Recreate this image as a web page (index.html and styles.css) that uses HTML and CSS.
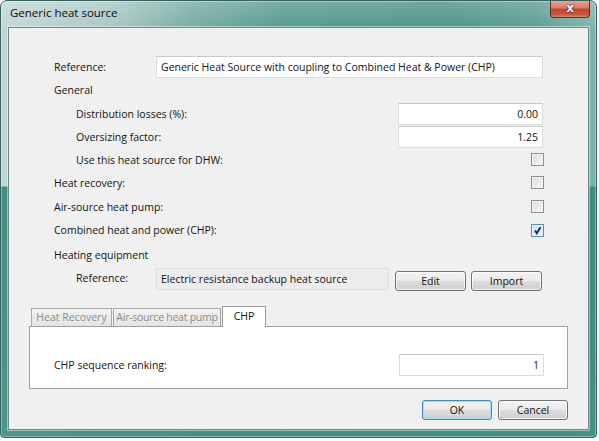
FILE: index.html
```html
<!DOCTYPE html>
<html>
<head>
<meta charset="utf-8">
<title>Generic heat source</title>
<link rel="stylesheet" href="styles.css">
</head>
<body>
<div class="window">
  <div class="titlebar">
    <span class="title">Generic heat source</span>
    <div class="close">x</div>
  </div>
  <div class="client">
    <div class="form">
      <div class="row r1">
        <span class="label lbl-ref">Reference:</span>
        <div class="textbox wide">Generic Heat Source with coupling to Combined Heat &amp; Power (CHP)</div>
      </div>
      <div class="row r2"><span class="label">General</span></div>
      <div class="row r3 sub">
        <span class="label">Distribution losses (%):</span>
        <div class="textbox num">0.00</div>
      </div>
      <div class="row r4 sub">
        <span class="label">Oversizing factor:</span>
        <div class="textbox num">1.25</div>
      </div>
      <div class="row r5 sub">
        <span class="label">Use this heat source for DHW:</span>
        <span class="check"></span>
      </div>
      <div class="row r6">
        <span class="label">Heat recovery:</span>
        <span class="check"></span>
      </div>
      <div class="row r7">
        <span class="label">Air-source heat pump:</span>
        <span class="check"></span>
      </div>
      <div class="row r8">
        <span class="label">Combined heat and power (CHP):</span>
        <span class="check checked"><svg viewBox="0 0 11 11" width="11" height="11"><path d="M3 5.5 L4.8 8.2 L8.5 2.2" fill="none" stroke="#17236b" stroke-width="1.9"/></svg></span>
      </div>
      <div class="row r9"><span class="label">Heating equipment</span></div>
      <div class="row r10 sub">
        <span class="label lbl-ref2">Reference:</span>
        <div class="textbox readonly">Electric resistance backup heat source</div>
        <button class="btn edit">Edit</button>
        <button class="btn import">Import</button>
      </div>
    </div>

    <div class="tabstrip">
      <div class="tab t1">Heat Recovery</div>
      <div class="tab t2">Air-source heat pump</div>
      <div class="tab active">CHP</div>
    </div>
    <div class="tabpanel">
      <div class="row panelrow">
        <span class="label">CHP sequence ranking:</span>
        <div class="textbox num">1</div>
      </div>
    </div>

    <div class="footer">
      <button class="btn ok">OK</button>
      <button class="btn cancel">Cancel</button>
    </div>
  </div>
</div>
</body>
</html>
```
FILE: styles.css
```css
html, body {
  margin: 0;
  padding: 0;
  background: #ffffff;
}
body {
  font-family: "Open Sans", "Noto Sans", "Liberation Sans", sans-serif;
  font-size: 10.5px;
  color: #141414;
}
.window {
  width: 581px;
  height: 429px;
  padding: 0 7px 7px 7px;
  border: 1px solid #35625d;
  border-radius: 7px 7px 4px 4px;
  background:
    linear-gradient(to bottom, rgba(255,255,255,0.22) 0px, rgba(255,255,255,0.04) 26px, rgba(0,0,0,0) 27px),
    linear-gradient(to bottom, rgba(0,0,0,0) 42.5%, rgba(55,137,126,0.92) 42.6%, rgba(62,142,131,0.9) 100%),
    linear-gradient(to right, #c2d6d3 0%, #a9c8c3 18%, #74aba3 32%, #52978d 48%, #4a9187 75%, #5a9c93 90%, #7db3ac 100%);
  box-shadow: inset 0 0 0 1px rgba(255,255,255,0.35);
}
.titlebar {
  height: 26px;
  display: flex;
  align-items: flex-start;
}
.title {
  margin-left: 2px;
  margin-top: 4px;
  font-size: 11.5px;
  color: #0c0c0c;
}
.close {
  margin-left: auto;
  margin-right: -1px;
  width: 40px;
  height: 17px;
  box-sizing: border-box;
  border: 1px solid #6b2b22;
  border-top: none;
  border-radius: 0 0 4px 4px;
  background: linear-gradient(to bottom, #e9a597 0%, #d87a66 45%, #c2422c 50%, #c85a43 85%, #d98a70 100%);
  color: #fff;
  font-family: "DejaVu Sans", sans-serif;
  font-weight: bold;
  font-size: 12px;
  line-height: 14px;
  text-align: center;
  text-shadow: 0 0 2px #3a0d08, 0 0 1px #3a0d08;
}
.client {
  height: 401px;
  border: 1px solid #6c8a86;
  background: #f0f0f0;
  box-shadow: 0 0 0 1px rgba(255,255,255,0.45);
}
.form {
  padding: 28px 45px 0 45px;
}
.row {
  display: flex;
  align-items: center;
}
.sub .label {
  margin-left: 22px;
}
.r1 { height: 22px; }
.r2 { height: 24px; }
.r3 { height: 23px; }
.r4 { height: 24px; }
.r5 { height: 21px; }
.r6 { height: 25px; }
.r7 { height: 23px; }
.r8 { height: 24px; }
.r9 { height: 25px; }
.r10 { height: 24px; align-items: flex-start; }
.r10 .label { margin-top: 4px; }
.lbl-ref { width: 102px; flex: none; }
.lbl-ref2 { width: 80px; flex: none; }
.textbox {
  box-sizing: border-box;
  height: 22px;
  line-height: 20px;
  border: 1px solid #dcdcdc;
  border-top-color: #c9c9c9;
  background: #ffffff;
  padding: 0 4px;
  white-space: nowrap;
  overflow: hidden;
}
.wide {
  flex: 1;
}
.num {
  width: 145px;
  margin-left: auto;
  text-align: right;
  padding-right: 4px;
}
.readonly {
  width: 233px;
  margin-top: 1px;
  background: #ececec;
  border-color: #dedede;
}
.check {
  margin-left: auto;
  margin-right: -1px;
  width: 13px;
  height: 13px;
  box-sizing: border-box;
  border: 1px solid #8f8f8f;
  background: linear-gradient(to bottom right, #dcdcdc, #f6f6f6);
  box-shadow: inset 0 0 0 1px #f4f4f4;
  display: flex;
  align-items: center;
  justify-content: center;
}
.check.checked {
  border-color: #5b8fb8;
  background: linear-gradient(to bottom right, #c8e2f5, #eef7fd);
  box-shadow: inset 0 0 0 1px #e6f3fc;
}
.btn {
  box-sizing: border-box;
  height: 20px;
  padding: 0;
  border: 1px solid #727272;
  border-radius: 3px;
  background: linear-gradient(to bottom, #f3f3f3 0%, #ebebeb 48%, #dddddd 52%, #cfcfcf 100%);
  box-shadow: inset 0 0 0 1px rgba(255,255,255,0.7);
  font-family: inherit;
  font-size: 10.5px;
  color: #141414;
  line-height: 17px;
}
.edit {
  width: 71px;
  margin-left: 6px;
  margin-top: 4px;
}
.import {
  width: 71px;
  margin-left: 5px;
  margin-top: 4px;
}
.tabstrip {
  margin: 15px 0 0 22px;
  height: 20px;
  display: flex;
  align-items: flex-end;
  position: relative;
  z-index: 1;
}
.tab {
  box-sizing: border-box;
  height: 18px;
  border: 1px solid #a9a9a9;
  border-bottom: none;
  background: linear-gradient(to bottom, #f2f2f2, #e4e4e4);
  color: #8d8d8d;
  font-size: 10.5px;
  line-height: 17px;
  text-align: center;
  white-space: nowrap;
  margin-right: 1px;
}
.t1 { width: 81px; }
.t2 { width: 108px; letter-spacing: -0.25px; }
.tab.active {
  width: 44px;
  height: 21px;
  margin-bottom: -1px;
  background: #ffffff;
  color: #111;
  border-color: #999999;
  line-height: 18px;
}
.tabpanel {
  box-sizing: border-box;
  margin: 0 20px;
  height: 63px;
  border: 1px solid #a0a0a0;
  background: #ffffff;
  padding: 27px 23px 0 24px;
}
.panelrow {
  height: 22px;
}
.footer {
  margin: 11px 20px 0 20px;
  display: flex;
  justify-content: flex-end;
}
.ok {
  width: 70px;
  border-color: #3c8dc4;
  box-shadow: inset 0 0 0 1px #9fdcf6;
}
.cancel {
  width: 70px;
  margin-left: 6px;
}
```
